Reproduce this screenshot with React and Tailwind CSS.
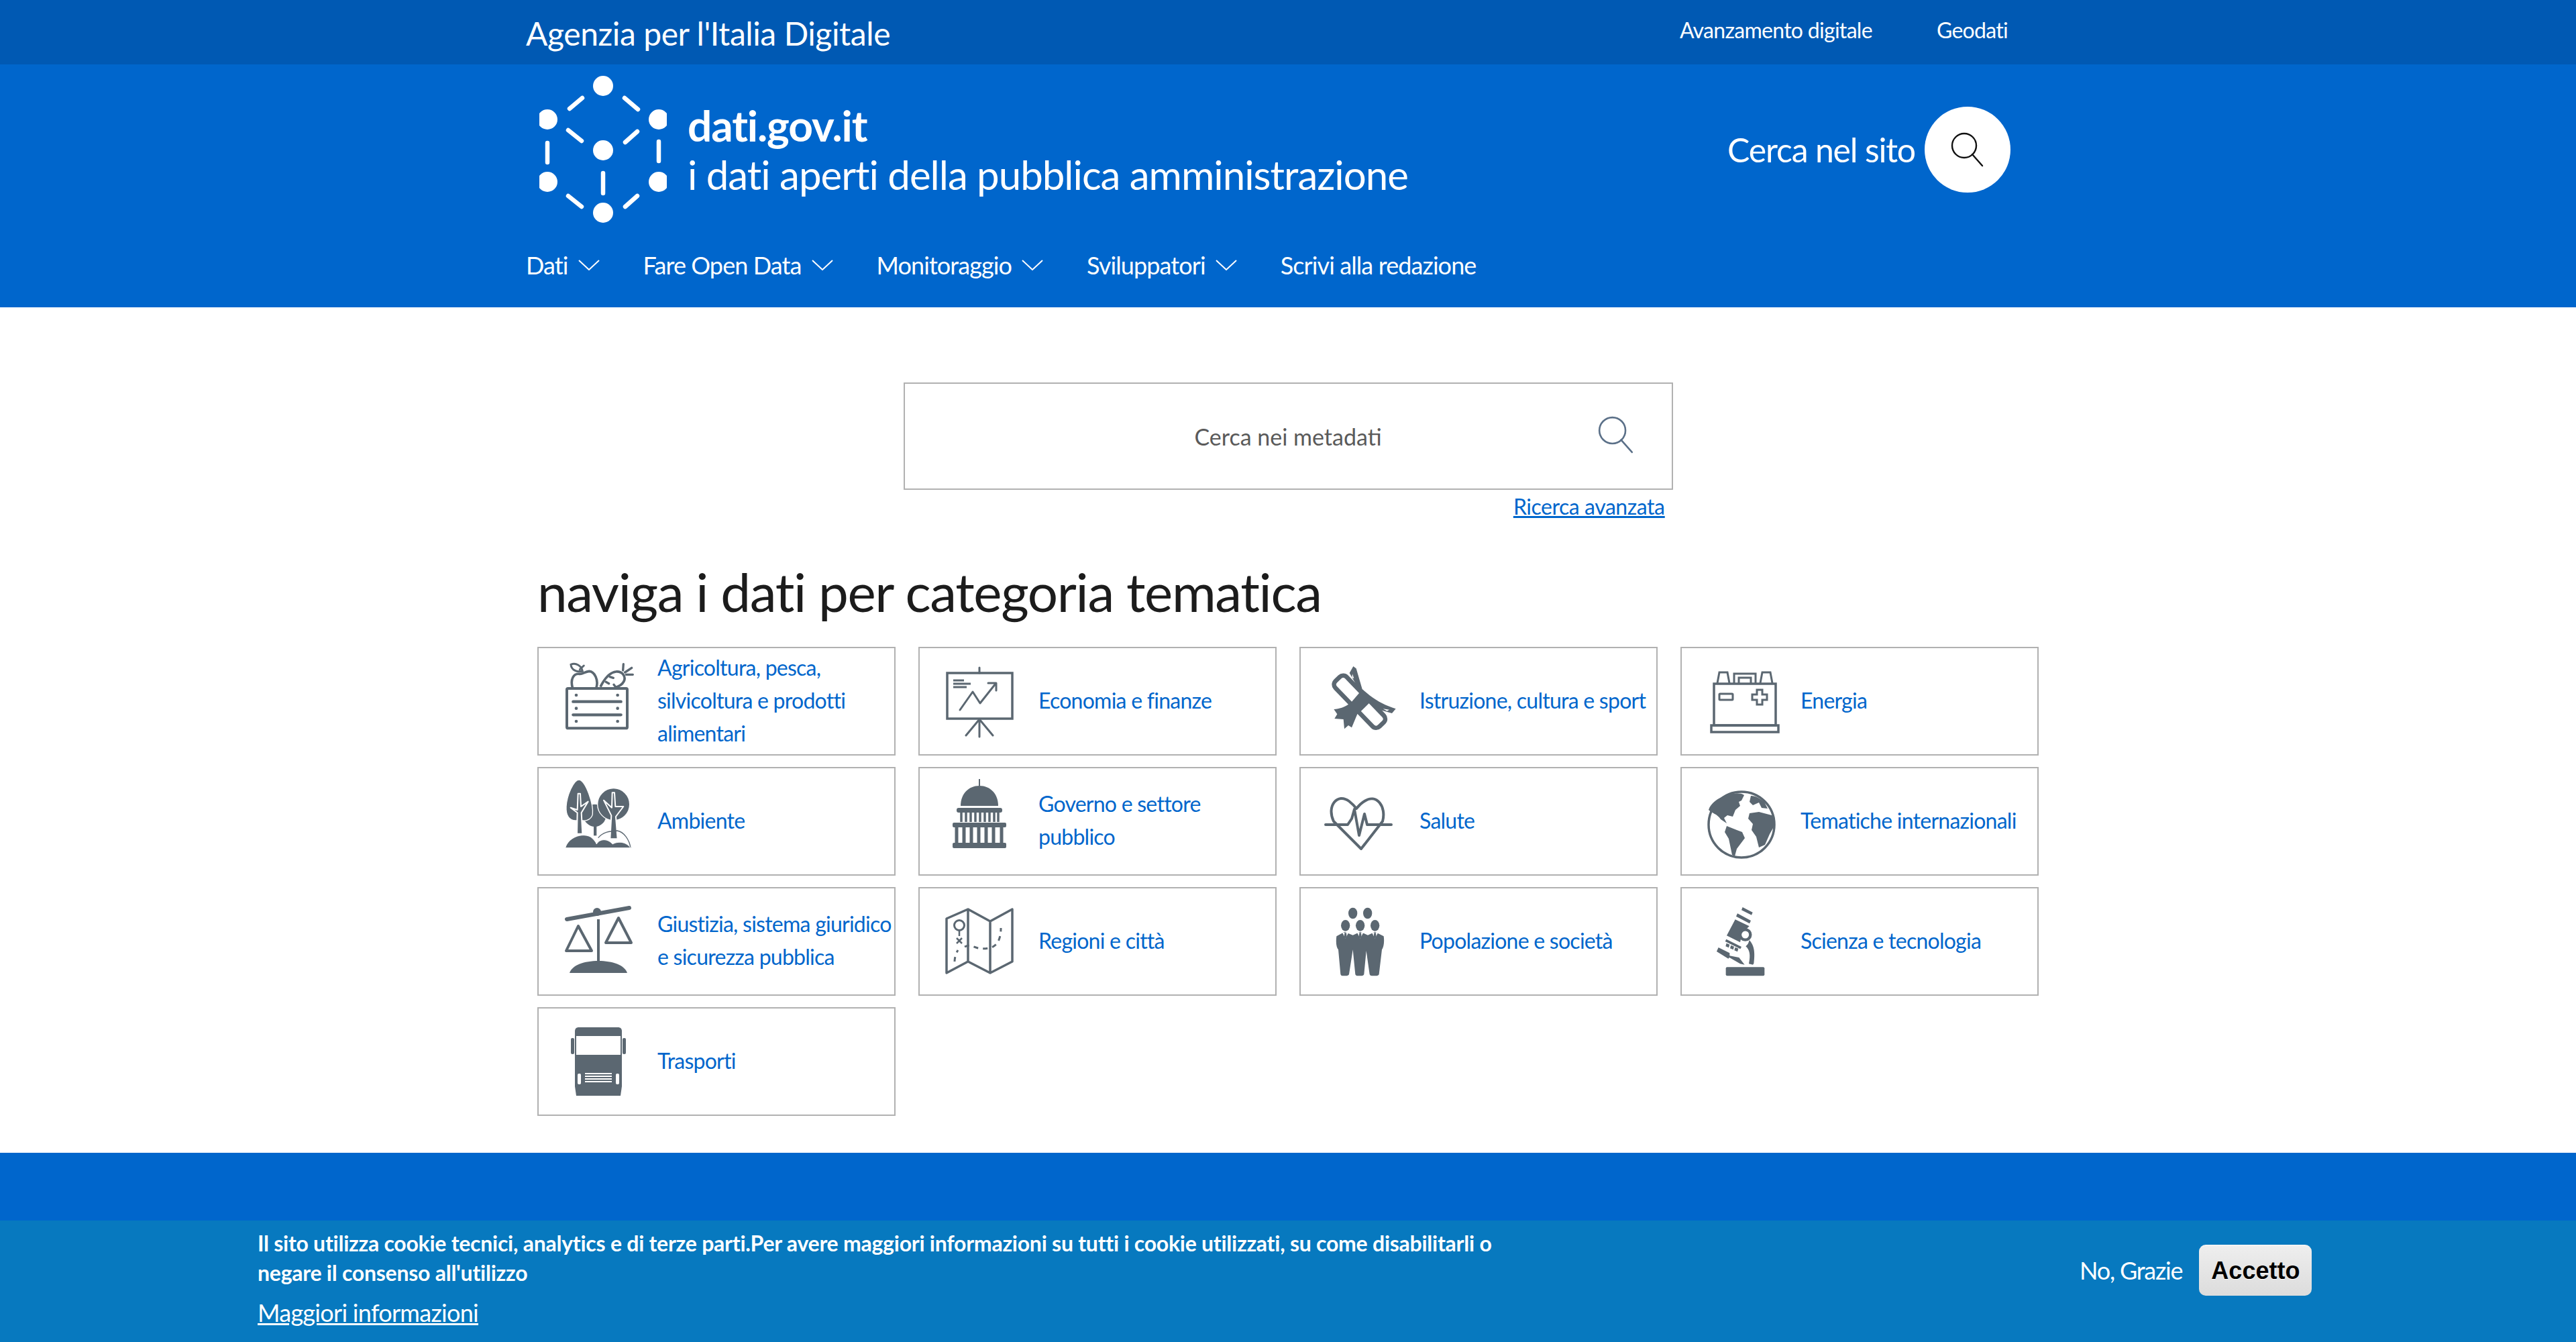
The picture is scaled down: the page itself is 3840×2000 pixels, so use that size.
import React from "react";

const slate = "#5b6771";

// Search magnifier, same shape in header and search box
const SearchIcon = ({ color, className }) => (
  <svg viewBox="0 0 50 52" className={className} fill="none" stroke={color} strokeWidth="2.4" strokeLinecap="round">
    <circle cx="20" cy="20" r="18" />
    <line x1="32" y1="33" x2="47" y2="50" />
  </svg>
);

const Chevron = () => (
  <svg viewBox="0 0 32 16" className="ml-[15px] h-[16px] w-[32px]" fill="none" stroke="white" strokeWidth="2">
    <polyline points="1,1 16,15 31,1" />
  </svg>
);

const Logo = () => (
  <svg viewBox="0 0 190 222" className="h-[222px] w-[190px] shrink-0" fill="white" stroke="white" strokeWidth="6.5" strokeLinecap="round">
    <circle cx="95" cy="16" r="15" stroke="none" />
    <circle cx="12" cy="66" r="15" stroke="none" />
    <circle cx="178" cy="66" r="15" stroke="none" />
    <circle cx="95" cy="112" r="15" stroke="none" />
    <circle cx="12" cy="159" r="15" stroke="none" />
    <circle cx="178" cy="159" r="15" stroke="none" />
    <circle cx="95" cy="205" r="15" stroke="none" />
    <line x1="64" y1="34" x2="45" y2="50" />
    <line x1="127" y1="34" x2="147" y2="51" />
    <line x1="43" y1="82" x2="63" y2="98" />
    <line x1="146" y1="84" x2="128" y2="100" />
    <line x1="12" y1="101" x2="12" y2="130" />
    <line x1="178" y1="99" x2="178" y2="128" />
    <line x1="95" y1="146" x2="95" y2="176" />
    <line x1="43" y1="180" x2="63" y2="196" />
    <line x1="146" y1="180" x2="128" y2="196" />
  </svg>
);

const icons = {
  crate: (
    <g transform="translate(3 -8) scale(0.3333)">
      <rect x="30" y="147" width="270" height="178" rx="5" fill="none" stroke={slate} strokeWidth="12" />
      <path d="M58 206h214M58 265h214" stroke={slate} strokeWidth="13" strokeLinecap="round" />
      <g fill={slate}>
        <circle cx="72" cy="177" r="7" />
        <circle cx="257" cy="177" r="7" />
        <circle cx="72" cy="236" r="7" />
        <circle cx="257" cy="236" r="7" />
        <circle cx="72" cy="294" r="7" />
        <circle cx="257" cy="294" r="7" />
      </g>
      <path d="M55 143C45 105 60 80 85 82c15 3 25-10 45-12 25 2 42 40 32 73" fill="none" stroke={slate} strokeWidth="11" />
      <path d="M48 40c22-10 47 5 52 30C75 75 50 65 48 40zM88 62l18-17" fill="none" stroke={slate} strokeWidth="9" strokeLinecap="round" />
      <path d="M180 140c15-30 40-65 70-68 30-2 45 23 35 43-10 20-30 25-40 28" fill="none" stroke={slate} strokeWidth="11" />
      <path d="M222 95l16 5M205 118l13 7M240 130l10 13M281 66l2-28M290 75l30-20M295 85h30" fill="none" stroke={slate} strokeWidth="10" strokeLinecap="round" />
    </g>
  ),
  board: (
    <>
      <rect x="12" y="18" width="97" height="68" fill="none" stroke={slate} strokeWidth="3.5" />
      <path d="M60 10v8M60 87v26M60 87L40 111M60 87l20 24" fill="none" stroke={slate} strokeWidth="3" strokeLinecap="round" />
      <path d="M21 29h16M21 34h26M21 39h20" stroke={slate} strokeWidth="3" />
      <path d="M31 73l19-27 11 17 23-29M73 33h12v11" fill="none" stroke={slate} strokeWidth="3" strokeLinecap="round" strokeLinejoin="round" />
    </>
  ),
  trees: (
    <g transform="translate(-2 -12) scale(0.3333)">
      <circle cx="170" cy="190" r="50" fill={slate} />
      <path d="M165 230h13v50h-13z" fill={slate} />
      <path d="M100 30c30 5 65 110 60 155-5 20-25 30-42 28H88c-33 2-48-23-46-63 3-50 33-120 58-120z" fill={slate} stroke="white" strokeWidth="4" />
      <circle cx="254" cy="140" r="72" fill={slate} stroke="white" strokeWidth="4" />
      <path d="M95 92h10l3 58 32-22-30 50 5 94H90l2-94-30-23 30 10z" fill={slate} stroke="white" strokeWidth="6" strokeLinejoin="round" />
      <path d="M248 88h10l4 62 36 0-34 45 8 100h-34l6-105-34-68 36 33z" fill={slate} stroke="white" strokeWidth="6" strokeLinejoin="round" />
      <path d="M185 290c20-25 50-30 85-32 30 4 55 42 60 77" fill="none" stroke={slate} strokeWidth="4" />
      <path d="M38 335c12-45 72-70 112-50 15 10 25 25 28 33 12-23 47-28 72 0 20-13 60-13 80 17z" fill={slate} stroke="white" strokeWidth="3" />
    </g>
  ),
  capitol: (
    <>
      <path d="M60-3v10" stroke={slate} strokeWidth="2" />
      <path d="M32 37c0-18 12-30 28-30s28 12 28 30z" fill={slate} />
      <rect x="26" y="40" width="68" height="7" rx="3" fill={slate} />
      <path d="M33 47v14M40 47v14M47 47v14M54 47v14M61 47v14M68 47v14M75 47v14M82 47v14M88 47v14" stroke={slate} strokeWidth="3.5" />
      <rect x="20" y="62" width="80" height="7" rx="2" fill={slate} />
      <path d="M26 69v24M37 69v24M48 69v24M59 69v24M70 69v24M81 69v24M93 69v24" stroke={slate} strokeWidth="5" />
      <rect x="20" y="92" width="80" height="8" rx="2" fill={slate} />
    </>
  ),
  scales: (
    <>
      <path d="M13 27L106 10" stroke={slate} strokeWidth="6" strokeLinecap="round" />
      <circle cx="58" cy="16" r="6" fill={slate} />
      <path d="M60 27v64" stroke={slate} strokeWidth="4" />
      <path d="M17 107c4-12 22-18 43-18s39 6 43 18z" fill={slate} />
      <path d="M30 37L12 74h38z" fill="none" stroke={slate} strokeWidth="4" strokeLinejoin="round" />
      <path d="M90 25L71 62h38z" fill="none" stroke={slate} strokeWidth="4" strokeLinejoin="round" />
    </>
  ),
  map: (
    <>
      <path d="M11 26L43 12l33 18 33-18v78L76 107 43 90 11 107zM43 12v78M76 30v77" fill="none" stroke={slate} strokeWidth="3.5" strokeLinejoin="round" />
      <circle cx="30" cy="36" r="7.5" fill="none" stroke={slate} strokeWidth="3" />
      <path d="M30 44v8M26 55l8 8M34 55l-8 8" stroke={slate} strokeWidth="2.5" />
      <path d="M23 90c0-6 2-12 5-17M38 68c8-4 12 0 20 2 10 2 17 0 22-2 8-4 12-14 12-28" fill="none" stroke={slate} strokeWidth="3" strokeDasharray="7 7" />
    </>
  ),
  truck: (
    <>
      <path d="M31 9h58c4 0 6 2 6 6v82l-2 14H27l-2-14V15c0-4 2-6 6-6z" fill={slate} />
      <rect x="27" y="22" width="66" height="28" fill="white" />
      <rect x="19" y="25" width="5" height="24" rx="2" fill={slate} />
      <rect x="96" y="25" width="5" height="24" rx="2" fill={slate} />
      <rect x="29" y="78" width="5" height="16" rx="2" fill="white" />
      <rect x="86" y="78" width="5" height="16" rx="2" fill="white" />
      <path d="M40 78h40M40 82h40M40 86h40M40 90h40" stroke="white" strokeWidth="2" />
    </>
  ),
  diploma: (
    <g transform="translate(-8 -8) scale(0.3333)">
      <rect x="59" y="171" width="283" height="70" rx="22" transform="rotate(46 200 206)" fill="none" stroke={slate} strokeWidth="20" />
      <path d="M155 78l17-30 13 10 27 92 33 28c35 27 75 47 117 60l-17 20-45-13-52-37-48 47-10 7-25 60-15-10-18 16-4-43-40-3 12-20-15-22c25-2 45-8 75-28l45-52-20-30z" fill={slate} />
      <path d="M168 82l7 20-9-3zM305 238l28 4-10 6z" fill="white" />
    </g>
  ),
  battery: (
    <>
      <path d="M19 34h92v62H19z" fill="none" stroke={slate} strokeWidth="3.5" />
      <rect x="15" y="96" width="100" height="10" fill="none" stroke={slate} strokeWidth="3.5" />
      <path d="M24 33l3-16h12l3 16M88 33l3-16h12l3 16M49 33V19h32v14M56 33V25h18v8" fill="none" stroke={slate} strokeWidth="3" />
      <rect x="27" y="49" width="20" height="9" rx="1" fill="none" stroke={slate} strokeWidth="3" />
      <path d="M83 43h8v7h7v8h-7v7h-8v-7h-7v-8h7z" fill="none" stroke={slate} strokeWidth="3" />
    </>
  ),
  heart: (
    <>
      <path d="M17 63C6 40 23 20 40 33c5 4 8 7 11 11 4-5 7-8 12-11 18-12 33 8 27 30L58 104z" transform="translate(3 -3)" fill="none" stroke={slate} strokeWidth="4" strokeLinejoin="round" />
      <path d="M8 65h33l6-9 4-14 7 39 8-32 4 16h36" fill="none" stroke={slate} strokeWidth="4" strokeLinecap="round" strokeLinejoin="round" />
    </>
  ),
  globe: (
    <>
      <circle cx="60" cy="65" r="49" fill="none" stroke={slate} strokeWidth="3.5" />
      <path d="M38 21c8-3 21-4 26 0l-4 8-4 2 2 6-7 6-4 10-8-2-5 4 4 8-9-6c-5-8-13-9-18-14 3-10 14-18 27-22z" fill={slate} />
      <path d="M38 67l15 6 8 3 4 9-12 16-3 11-4-2-5-24-6-10z" fill={slate} />
      <path d="M74 22c8 0 13 4 20 9l5 10-9-1-4-8-9 4-5-5zM72 48l14-2 23 6 1 13-8 14-7 16-9 4-4-16-7-10 2-9-7-8z" fill={slate} />
    </>
  ),
  people: (
    <g transform="translate(-3 -6) scale(0.3333)" fill={slate}>
      <ellipse cx="155" cy="72" rx="20" ry="25" />
      <ellipse cx="221" cy="72" rx="20" ry="25" />
      <ellipse cx="122" cy="127" rx="20" ry="25" />
      <ellipse cx="188" cy="127" rx="20" ry="25" />
      <ellipse cx="254" cy="127" rx="20" ry="25" />
      <path d="M82 175l36-20 37 15 33-15 34 15 32-15 39 20c4 30-1 50-8 60l-13 110q-2 7-17 7h-15q-8 0-10-7l-15-105-10 105q-2 7-15 7h-12q-10 0-12-7l-11-110-17 110q-2 7-18 7h-12q-6 0-8-7l-10-110c-8-10-12-30-8-60z" />
      <path d="M108 158h28l-14 27zM174 158h28l-14 27zM240 158h28l-14 27z" fill="white" />
      <path d="M118 160h8l2 18-6 7-6-7zM184 160h8l2 18-6 7-6-7zM250 160h8l2 18-6 7-6-7z" />
    </g>
  ),
  microscope: (
    <g transform="translate(-1 -6) scale(0.3333)" fill={slate}>
      <rect x="113" y="313" width="173" height="39" rx="6" />
      <path d="M188 45l45 23-5 12-45-22zM165 73l60 32-6 13-60-32z" />
      <path d="M155 100l63 30-18 18a32 32 0 0 0-20 40l-3 14-60-30z" />
      <path d="M115 188l68 34-5 10-68-34z" />
      <path d="M116 206l14 6-4 14-14-6zM136 215l14 6-4 14-14-6zM155 224l14 6-4 14-14-6z" />
      <path d="M218 192c18 20 28 45 20 105l-4 5-18-4c8-40 4-62-14-78 8-6 14-16 16-28z" />
      <path d="M80 225l50 25v12l42 8 25 32-20-4-48-28-5 5-52-32z" />
      <circle cx="200" cy="168" r="23" fill="none" stroke={slate} strokeWidth="13" />
    </g>
  ),
};

const categories = [
  ["crate", "Agricoltura, pesca, silvicoltura e prodotti alimentari"],
  ["board", "Economia e finanze"],
  ["diploma", "Istruzione, cultura e sport"],
  ["battery", "Energia"],
  ["trees", "Ambiente"],
  ["capitol", "Governo e settore pubblico"],
  ["heart", "Salute"],
  ["globe", "Tematiche internazionali"],
  ["scales", "Giustizia, sistema giuridico e sicurezza pubblica"],
  ["map", "Regioni e città"],
  ["people", "Popolazione e società"],
  ["microscope", "Scienza e tecnologia"],
  ["truck", "Trasporti"],
];

const navItems = ["Dati", "Fare Open Data", "Monitoraggio", "Sviluppatori"];

const CategoryCard = ({ icon, label }) => (
  <a className="flex h-[162px] w-[534px] items-center border-2 border-[#b1b1b1] bg-white">
    <div className="flex w-[177px] shrink-0 justify-center">
      <svg viewBox="0 0 120 120" className="h-[120px] w-[120px] overflow-visible">
        {icons[icon]}
      </svg>
    </div>
    <span className="pb-[4px] text-[32px] leading-[49px] tracking-[-0.75px] text-[#0066cc]">{label}</span>
  </a>
);

export default function App() {
  return (
    <div className="flex min-h-[2000px] flex-col bg-[#0066cc] font-['Lato',sans-serif] text-white">
      <div className="h-[96px] bg-[#0059b3]">
        <div className="mx-auto flex w-[2272px] justify-between pr-[63px]">
          <span className="text-[48px] leading-[100px] tracking-[-0.42px]">Agenzia per l'Italia Digitale</span>
          <div className="flex gap-[96px] text-[32px] leading-[90px] tracking-[-0.7px]">
            <a>Avanzamento digitale</a>
            <a>Geodati</a>
          </div>
        </div>
      </div>

      <header className="h-[362px]">
        <div className="mx-auto w-[2272px]">
          <div className="flex h-[254px] items-center justify-between pr-[59px]">
            <div className="flex items-center pl-[20px]">
              <Logo />
              <div className="ml-[31px]">
                <div className="text-[64px] leading-[74px] font-bold tracking-[-1.1px]">dati.gov.it</div>
                <div className="text-[60px] leading-[72px] tracking-[-1px]">i dati aperti della pubblica amministrazione</div>
              </div>
            </div>
            <div className="flex items-center gap-[14px]">
              <span className="text-[50px] tracking-[-1.2px]">Cerca nel sito</span>
              <div className="flex h-[128px] w-[128px] items-center justify-center rounded-full bg-white">
                <SearchIcon color="#111" className="h-[52px] w-[50px]" />
              </div>
            </div>
          </div>
          <nav className="flex items-center pt-[20px] text-[36px] leading-[50px] tracking-[-0.9px]">
            {navItems.map((item) => (
              <a key={item} className="mr-[65px] flex items-center">
                {item}
                <Chevron />
              </a>
            ))}
            <a>Scrivi alla redazione</a>
          </nav>
        </div>
      </header>

      <main className="h-[1260px] bg-white pt-[112px]">
        <div className="mx-auto w-[1147px]">
          <div className="relative flex h-[160px] items-center justify-center border-2 border-[#b1b1b1] text-[34px] text-[#5a5a5a]">
            Cerca nei metadati
            <SearchIcon color="#5b7088" className="absolute top-[46px] right-[56px] h-[60px] w-[54px]" />
          </div>
          <div className="pr-[12px] text-right text-[32px] leading-[50px] tracking-[-0.45px] text-[#0066cc] underline">
            <a>Ricerca avanzata</a>
          </div>
        </div>
        <div className="mx-auto w-[2238px]">
          <h2 className="mt-[48px] text-[80px] leading-[106px] tracking-[-1.36px] text-[#1c1c1c]">naviga i dati per categoria tematica</h2>
          <div className="mt-[30px] grid grid-cols-[repeat(4,534px)] gap-x-[34px] gap-y-[17px]">
            {categories.map(([icon, label]) => (
              <CategoryCard key={label} icon={icon} label={label} />
            ))}
          </div>
        </div>
      </main>

      <div className="fixed inset-x-0 bottom-0 flex h-[181px] bg-[#0779bf] pl-[384px]">
        <div className="w-[1880px] pt-[12px]">
          <p className="w-[1880px] text-[32px] leading-[44px] font-bold tracking-[-0.25px]">
            Il sito utilizza cookie tecnici, analytics e di terze parti.Per avere maggiori informazioni su tutti i cookie utilizzati, su come disabilitarli o negare il consenso all'utilizzo
          </p>
          <a className="mt-[12px] block text-[36px] leading-[50px] tracking-[-0.7px] underline">Maggiori informazioni</a>
        </div>
        <div className="ml-[836px] mt-[36px] flex h-[76px] items-center gap-[25px] self-start">
          <span className="text-[36px] tracking-[-1.2px]">No, Grazie</span>
          <button className="h-[76px] w-[168px] rounded-[10px] border-t-2 border-[#f4f4f4] bg-gradient-to-b from-[#eeeeee] to-[#dcdcdc] font-['Liberation_Sans',sans-serif] text-[36px] font-bold text-black [text-shadow:0_1px_0_#fff]">
            Accetto
          </button>
        </div>
      </div>
    </div>
  );
}
